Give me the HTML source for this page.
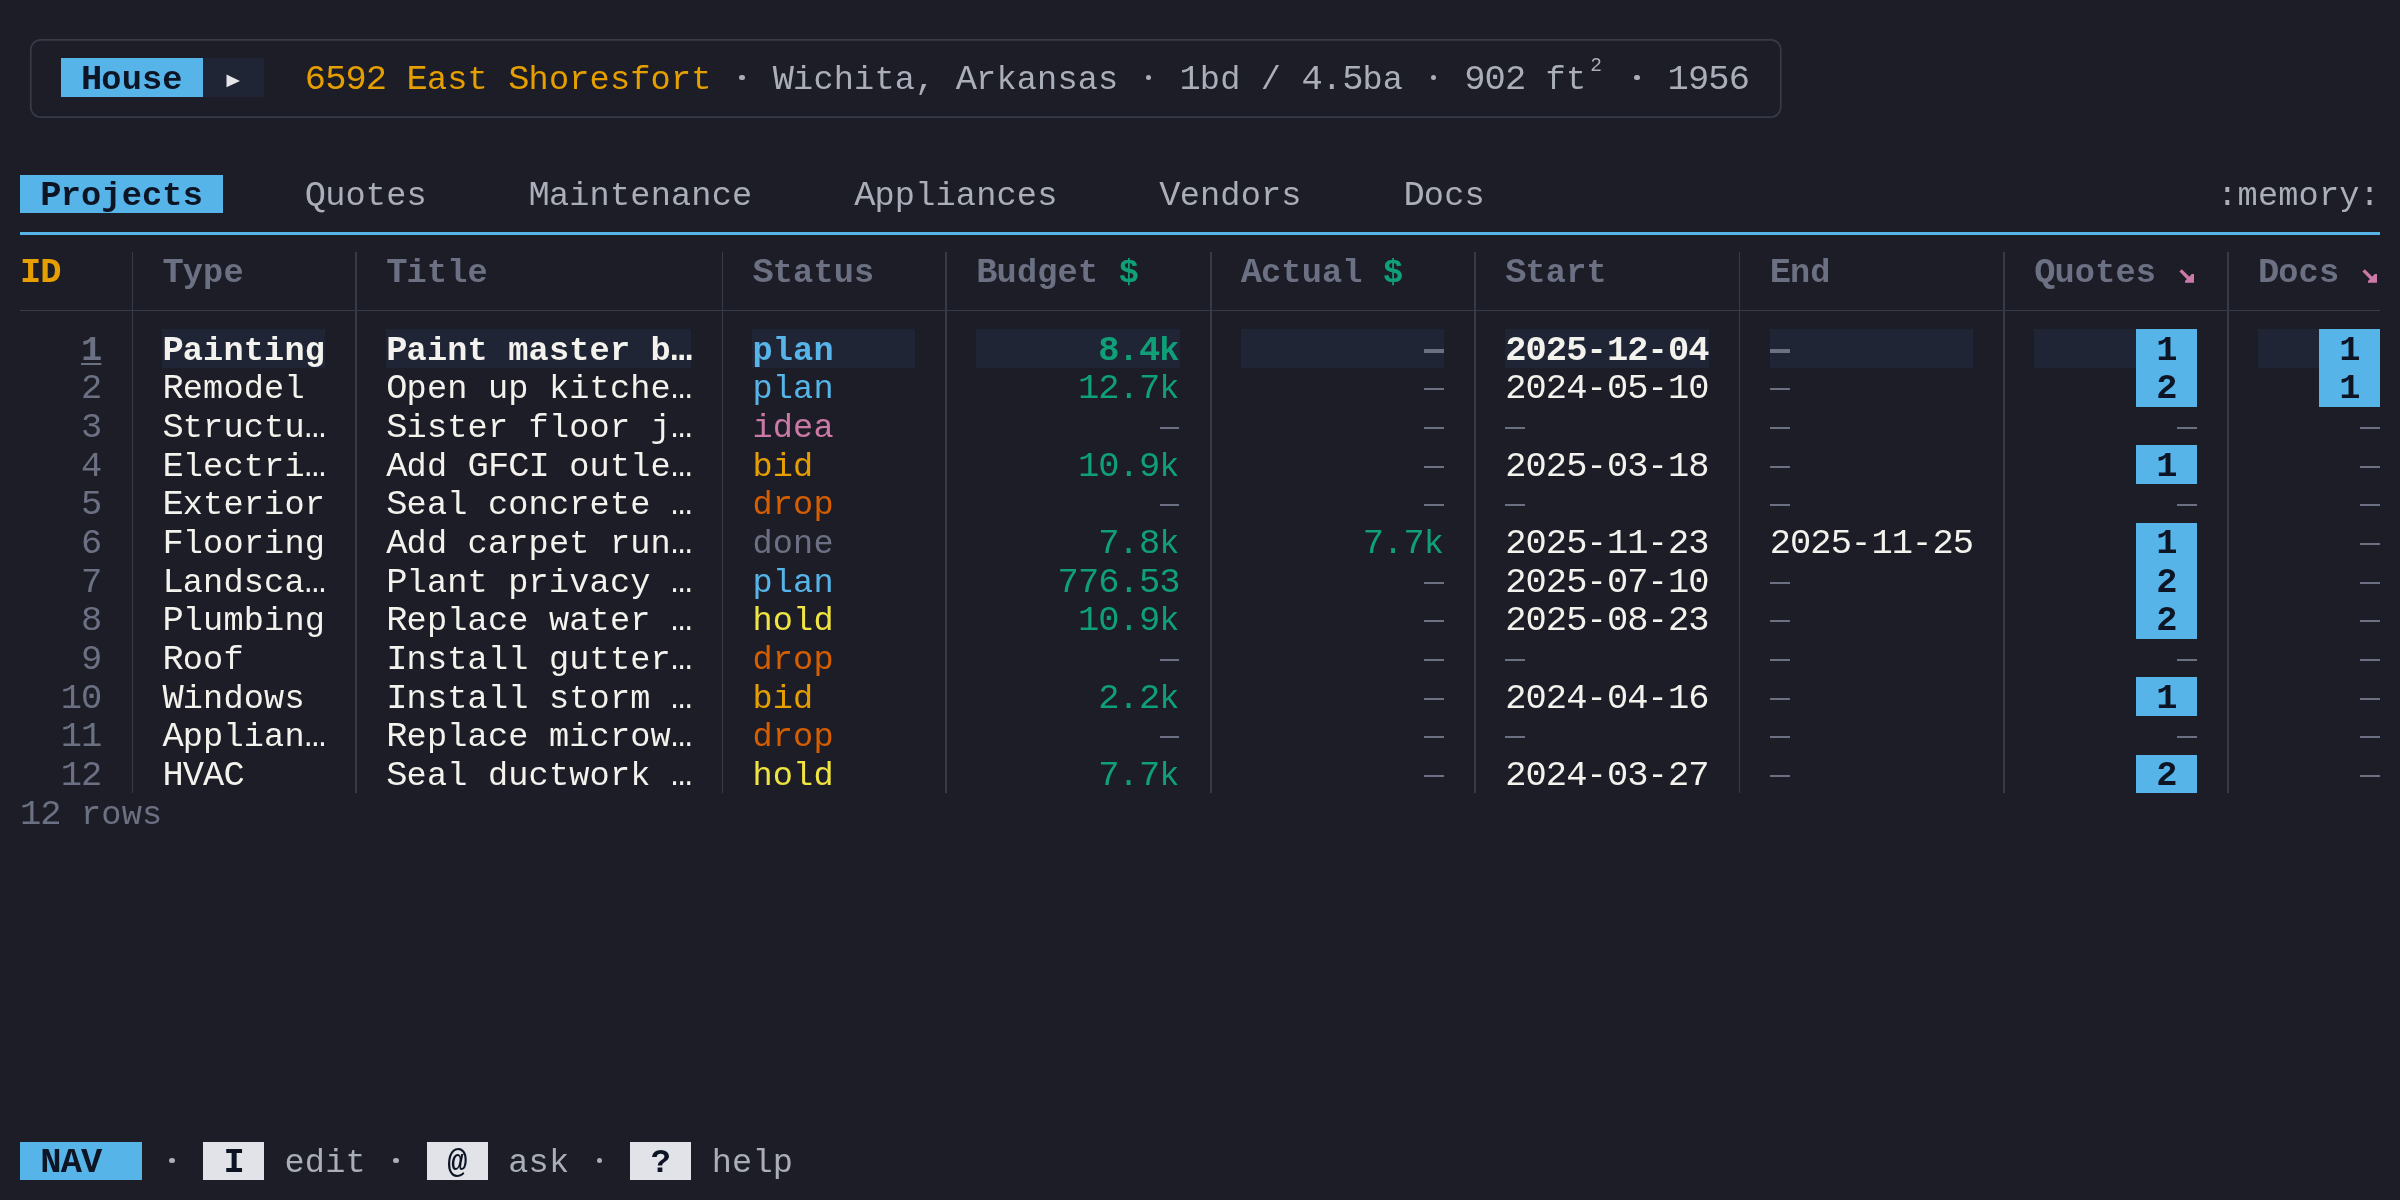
<!DOCTYPE html>
<html><head><meta charset="utf-8"><style>
html,body{margin:0;padding:0;}
body{width:2400px;height:1200px;overflow:hidden;background:#1d1d27;position:relative;}
.b{position:absolute;}
.t{position:absolute;white-space:pre;font-family:"Liberation Mono",monospace;font-size:33.6px;line-height:38.68px;height:38.68px;letter-spacing:0.185px;}
.bd{font-weight:bold;}
.u{font-size:35.4px;letter-spacing:-0.895px;line-height:0;}
.ul{text-decoration:underline;text-decoration-thickness:2px;text-underline-offset:3px;}
#root{position:absolute;left:0;top:0;width:2400px;height:1200px;will-change:transform;}
</style></head><body><div id="root">
<svg class="b" style="left:0;top:0" width="1800" height="140"><rect x="30.75" y="39.8" width="1750" height="77.3" rx="10" ry="10" fill="none" stroke="#363b4a" stroke-width="1.7"/></svg>
<div class="b" style="left:60.69px;top:58.48px;width:142.41px;height:38.68px;background:#56b4e9"></div>
<div class="t bd" style="left:81.03px;top:60.88px;color:#0d1424"><span class="u">H</span>ouse</div>
<div class="b" style="left:203.10px;top:58.48px;width:61.03px;height:38.68px;background:#202536"></div>
<svg class="b" style="left:226px;top:74px" width="15" height="14" viewBox="0 0 15 14"><path d="M0.5 0.6 L14 6.9 L0.5 13.2 Z" fill="#e6e6ea"/></svg>
<div class="t" style="left:304.83px;top:60.88px;color:#e69f00"><span class="u">6592</span> <span class="u">E</span>ast <span class="u">S</span>horesfort</div>
<div class="t" style="left:711.73px;top:60.88px;color:#a9aeb9">   <span class="u">W</span>ichita, <span class="u">A</span>rkansas   <span class="u">1</span>bd / <span class="u">4</span>.<span class="u">5</span>ba   <span class="u">902</span> ft    <span class="u">1956</span></div>
<div class="b" style="left:1590.2px;top:57.3px;font-family:'Liberation Mono',monospace;font-size:19.5px;line-height:19.5px;color:#a9aeb9">2</div>
<div class="b" style="left:739.15px;top:74.58px;width:5.4px;height:5.4px;border-radius:50%;background:#a9aeb9"></div>
<div class="b" style="left:1146.05px;top:74.58px;width:5.4px;height:5.4px;border-radius:50%;background:#a9aeb9"></div>
<div class="b" style="left:1430.88px;top:74.58px;width:5.4px;height:5.4px;border-radius:50%;background:#a9aeb9"></div>
<div class="b" style="left:1634.33px;top:74.58px;width:5.4px;height:5.4px;border-radius:50%;background:#a9aeb9"></div>
<div class="b" style="left:20.00px;top:174.52px;width:203.45px;height:38.68px;background:#56b4e9"></div>
<div class="t bd" style="left:40.34px;top:176.92px;color:#0d1424"><span class="u">P</span>rojects</div>
<div class="t" style="left:304.83px;top:176.92px;color:#a9aeb9"><span class="u">Q</span>uotes</div>
<div class="t" style="left:528.62px;top:176.92px;color:#a9aeb9"><span class="u">M</span>aintenance</div>
<div class="t" style="left:854.14px;top:176.92px;color:#a9aeb9"><span class="u">A</span>ppliances</div>
<div class="t" style="left:1159.32px;top:176.92px;color:#a9aeb9"><span class="u">V</span>endors</div>
<div class="t" style="left:1403.46px;top:176.92px;color:#a9aeb9"><span class="u">D</span>ocs</div>
<div class="t" style="left:2217.26px;top:176.92px;color:#a9aeb9">:memory:</div>
<div class="b" style="left:20px;top:231.5px;width:2360px;height:3px;background:#56b4e9"></div>
<div class="t bd" style="left:20.00px;top:254.28px;color:#e69f00"><span class="u">ID</span></div>
<div class="t bd" style="left:162.41px;top:254.28px;color:#6b7183"><span class="u">T</span>ype</div>
<div class="t bd" style="left:386.21px;top:254.28px;color:#6b7183"><span class="u">T</span>itle</div>
<div class="t bd" style="left:752.42px;top:254.28px;color:#6b7183"><span class="u">S</span>tatus</div>
<div class="t bd" style="left:976.21px;top:254.28px;color:#6b7183"><span class="u">B</span>udget</div>
<div class="t bd" style="left:1240.70px;top:254.28px;color:#6b7183"><span class="u">A</span>ctual</div>
<div class="t bd" style="left:1505.18px;top:254.28px;color:#6b7183"><span class="u">S</span>tart</div>
<div class="t bd" style="left:1769.67px;top:254.28px;color:#6b7183"><span class="u">E</span>nd</div>
<div class="t bd" style="left:2034.15px;top:254.28px;color:#6b7183"><span class="u">Q</span>uotes</div>
<div class="t bd" style="left:2257.95px;top:254.28px;color:#6b7183"><span class="u">D</span>ocs</div>
<div class="t bd" style="left:1118.63px;top:254.28px;color:#0fa078">$</div>
<div class="t bd" style="left:1383.12px;top:254.28px;color:#0fa078">$</div>
<svg class="b" style="left:2179.17px;top:269.48px" width="16" height="16" viewBox="0 0 16 16"><path d="M1.6 1.4 L11 10.8" stroke="#cc79a7" stroke-width="3.4" fill="none"/><path d="M6 12 L6 13.8 L15 13.8 L15 5.1 L12.8 5.1 Z" fill="#cc79a7"/></svg>
<svg class="b" style="left:2362.27px;top:269.48px" width="16" height="16" viewBox="0 0 16 16"><path d="M1.6 1.4 L11 10.8" stroke="#cc79a7" stroke-width="3.4" fill="none"/><path d="M6 12 L6 13.8 L15 13.8 L15 5.1 L12.8 5.1 Z" fill="#cc79a7"/></svg>
<div class="b" style="left:131.55px;top:251.88px;width:1.7px;height:541.52px;background:#363b4a"></div>
<div class="b" style="left:355.34px;top:251.88px;width:1.7px;height:541.52px;background:#363b4a"></div>
<div class="b" style="left:721.55px;top:251.88px;width:1.7px;height:541.52px;background:#363b4a"></div>
<div class="b" style="left:945.35px;top:251.88px;width:1.7px;height:541.52px;background:#363b4a"></div>
<div class="b" style="left:1209.83px;top:251.88px;width:1.7px;height:541.52px;background:#363b4a"></div>
<div class="b" style="left:1474.32px;top:251.88px;width:1.7px;height:541.52px;background:#363b4a"></div>
<div class="b" style="left:1738.80px;top:251.88px;width:1.7px;height:541.52px;background:#363b4a"></div>
<div class="b" style="left:2003.29px;top:251.88px;width:1.7px;height:541.52px;background:#363b4a"></div>
<div class="b" style="left:2227.08px;top:251.88px;width:1.7px;height:541.52px;background:#363b4a"></div>
<div class="b" style="left:20px;top:309.6px;width:2360px;height:1.6px;background:#363b4a"></div>
<div class="b" style="left:162.41px;top:329.24px;width:162.76px;height:38.68px;background:#202536"></div>
<div class="b" style="left:386.21px;top:329.24px;width:305.17px;height:38.68px;background:#202536"></div>
<div class="b" style="left:752.42px;top:329.24px;width:162.76px;height:38.68px;background:#202536"></div>
<div class="b" style="left:976.21px;top:329.24px;width:203.45px;height:38.68px;background:#202536"></div>
<div class="b" style="left:1240.70px;top:329.24px;width:203.45px;height:38.68px;background:#202536"></div>
<div class="b" style="left:1505.18px;top:329.24px;width:203.45px;height:38.68px;background:#202536"></div>
<div class="b" style="left:1769.67px;top:329.24px;width:203.45px;height:38.68px;background:#202536"></div>
<div class="b" style="left:2034.15px;top:329.24px;width:162.76px;height:38.68px;background:#202536"></div>
<div class="b" style="left:2257.95px;top:329.24px;width:122.07px;height:38.68px;background:#202536"></div>
<div class="t bd ul" style="left:81.03px;top:331.64px;color:#6b7183"><span class="u">1</span></div>
<div class="t bd" style="left:162.41px;top:331.64px;color:#f3f2ed"><span class="u">P</span>ainting</div>
<div class="t bd" style="left:386.21px;top:331.64px;color:#f3f2ed"><span class="u">P</span>aint master b<span class="u">…</span></div>
<div class="t bd" style="left:752.42px;top:331.64px;color:#56b4e9">plan</div>
<div class="t bd" style="left:1098.28px;top:331.64px;color:#0fa078"><span class="u">8</span>.<span class="u">4</span>k</div>
<div class="b" style="left:1424.10px;top:349.00px;width:19.74px;height:4px;background:#6b7183"></div>
<div class="t bd" style="left:1505.18px;top:331.64px;color:#f3f2ed"><span class="u">2025</span>-<span class="u">12</span>-<span class="u">04</span></div>
<div class="b" style="left:1769.97px;top:349.00px;width:19.74px;height:4px;background:#6b7183"></div>
<div class="b" style="left:2135.88px;top:329.24px;width:61.03px;height:38.68px;background:#56b4e9"></div>
<div class="t bd" style="left:2156.22px;top:331.64px;color:#0d1424"><span class="u">1</span></div>
<div class="b" style="left:2318.98px;top:329.24px;width:61.03px;height:38.68px;background:#56b4e9"></div>
<div class="t bd" style="left:2339.33px;top:331.64px;color:#0d1424"><span class="u">1</span></div>
<div class="t" style="left:81.03px;top:370.32px;color:#6b7183"><span class="u">2</span></div>
<div class="t" style="left:162.41px;top:370.32px;color:#f3f2ed"><span class="u">R</span>emodel</div>
<div class="t" style="left:386.21px;top:370.32px;color:#f3f2ed"><span class="u">O</span>pen up kitche<span class="u">…</span></div>
<div class="t" style="left:752.42px;top:370.32px;color:#56b4e9">plan</div>
<div class="t" style="left:1077.94px;top:370.32px;color:#0fa078"><span class="u">12</span>.<span class="u">7</span>k</div>
<div class="b" style="left:1424.10px;top:388.00px;width:19.74px;height:2px;background:#6b7183"></div>
<div class="t" style="left:1505.18px;top:370.32px;color:#f3f2ed"><span class="u">2024</span>-<span class="u">05</span>-<span class="u">10</span></div>
<div class="b" style="left:1769.97px;top:388.00px;width:19.74px;height:2px;background:#6b7183"></div>
<div class="b" style="left:2135.88px;top:367.92px;width:61.03px;height:38.68px;background:#56b4e9"></div>
<div class="t bd" style="left:2156.22px;top:370.32px;color:#0d1424"><span class="u">2</span></div>
<div class="b" style="left:2318.98px;top:367.92px;width:61.03px;height:38.68px;background:#56b4e9"></div>
<div class="t bd" style="left:2339.33px;top:370.32px;color:#0d1424"><span class="u">1</span></div>
<div class="t" style="left:81.03px;top:409.00px;color:#6b7183"><span class="u">3</span></div>
<div class="t" style="left:162.41px;top:409.00px;color:#f3f2ed"><span class="u">S</span>tructu<span class="u">…</span></div>
<div class="t" style="left:386.21px;top:409.00px;color:#f3f2ed"><span class="u">S</span>ister floor j<span class="u">…</span></div>
<div class="t" style="left:752.42px;top:409.00px;color:#cc79a7">idea</div>
<div class="b" style="left:1159.62px;top:427.00px;width:19.74px;height:2px;background:#6b7183"></div>
<div class="b" style="left:1424.10px;top:427.00px;width:19.74px;height:2px;background:#6b7183"></div>
<div class="b" style="left:1505.48px;top:427.00px;width:19.74px;height:2px;background:#6b7183"></div>
<div class="b" style="left:1769.97px;top:427.00px;width:19.74px;height:2px;background:#6b7183"></div>
<div class="b" style="left:2176.87px;top:427.00px;width:19.74px;height:2px;background:#6b7183"></div>
<div class="b" style="left:2359.97px;top:427.00px;width:19.74px;height:2px;background:#6b7183"></div>
<div class="t" style="left:81.03px;top:447.68px;color:#6b7183"><span class="u">4</span></div>
<div class="t" style="left:162.41px;top:447.68px;color:#f3f2ed"><span class="u">E</span>lectri<span class="u">…</span></div>
<div class="t" style="left:386.21px;top:447.68px;color:#f3f2ed"><span class="u">A</span>dd <span class="u">GFCI</span> outle<span class="u">…</span></div>
<div class="t" style="left:752.42px;top:447.68px;color:#e69f00">bid</div>
<div class="t" style="left:1077.94px;top:447.68px;color:#0fa078"><span class="u">10</span>.<span class="u">9</span>k</div>
<div class="b" style="left:1424.10px;top:466.00px;width:19.74px;height:2px;background:#6b7183"></div>
<div class="t" style="left:1505.18px;top:447.68px;color:#f3f2ed"><span class="u">2025</span>-<span class="u">03</span>-<span class="u">18</span></div>
<div class="b" style="left:1769.97px;top:466.00px;width:19.74px;height:2px;background:#6b7183"></div>
<div class="b" style="left:2135.88px;top:445.28px;width:61.03px;height:38.68px;background:#56b4e9"></div>
<div class="t bd" style="left:2156.22px;top:447.68px;color:#0d1424"><span class="u">1</span></div>
<div class="b" style="left:2359.97px;top:466.00px;width:19.74px;height:2px;background:#6b7183"></div>
<div class="t" style="left:81.03px;top:486.36px;color:#6b7183"><span class="u">5</span></div>
<div class="t" style="left:162.41px;top:486.36px;color:#f3f2ed"><span class="u">E</span>xterior</div>
<div class="t" style="left:386.21px;top:486.36px;color:#f3f2ed"><span class="u">S</span>eal concrete <span class="u">…</span></div>
<div class="t" style="left:752.42px;top:486.36px;color:#d55e00">drop</div>
<div class="b" style="left:1159.62px;top:504.00px;width:19.74px;height:2px;background:#6b7183"></div>
<div class="b" style="left:1424.10px;top:504.00px;width:19.74px;height:2px;background:#6b7183"></div>
<div class="b" style="left:1505.48px;top:504.00px;width:19.74px;height:2px;background:#6b7183"></div>
<div class="b" style="left:1769.97px;top:504.00px;width:19.74px;height:2px;background:#6b7183"></div>
<div class="b" style="left:2176.87px;top:504.00px;width:19.74px;height:2px;background:#6b7183"></div>
<div class="b" style="left:2359.97px;top:504.00px;width:19.74px;height:2px;background:#6b7183"></div>
<div class="t" style="left:81.03px;top:525.04px;color:#6b7183"><span class="u">6</span></div>
<div class="t" style="left:162.41px;top:525.04px;color:#f3f2ed"><span class="u">F</span>looring</div>
<div class="t" style="left:386.21px;top:525.04px;color:#f3f2ed"><span class="u">A</span>dd carpet run<span class="u">…</span></div>
<div class="t" style="left:752.42px;top:525.04px;color:#6b7183">done</div>
<div class="t" style="left:1098.28px;top:525.04px;color:#0fa078"><span class="u">7</span>.<span class="u">8</span>k</div>
<div class="t" style="left:1362.77px;top:525.04px;color:#0fa078"><span class="u">7</span>.<span class="u">7</span>k</div>
<div class="t" style="left:1505.18px;top:525.04px;color:#f3f2ed"><span class="u">2025</span>-<span class="u">11</span>-<span class="u">23</span></div>
<div class="t" style="left:1769.67px;top:525.04px;color:#f3f2ed"><span class="u">2025</span>-<span class="u">11</span>-<span class="u">25</span></div>
<div class="b" style="left:2135.88px;top:522.64px;width:61.03px;height:38.68px;background:#56b4e9"></div>
<div class="t bd" style="left:2156.22px;top:525.04px;color:#0d1424"><span class="u">1</span></div>
<div class="b" style="left:2359.97px;top:543.00px;width:19.74px;height:2px;background:#6b7183"></div>
<div class="t" style="left:81.03px;top:563.72px;color:#6b7183"><span class="u">7</span></div>
<div class="t" style="left:162.41px;top:563.72px;color:#f3f2ed"><span class="u">L</span>andsca<span class="u">…</span></div>
<div class="t" style="left:386.21px;top:563.72px;color:#f3f2ed"><span class="u">P</span>lant privacy <span class="u">…</span></div>
<div class="t" style="left:752.42px;top:563.72px;color:#56b4e9">plan</div>
<div class="t" style="left:1057.60px;top:563.72px;color:#0fa078"><span class="u">776</span>.<span class="u">53</span></div>
<div class="b" style="left:1424.10px;top:582.00px;width:19.74px;height:2px;background:#6b7183"></div>
<div class="t" style="left:1505.18px;top:563.72px;color:#f3f2ed"><span class="u">2025</span>-<span class="u">07</span>-<span class="u">10</span></div>
<div class="b" style="left:1769.97px;top:582.00px;width:19.74px;height:2px;background:#6b7183"></div>
<div class="b" style="left:2135.88px;top:561.32px;width:61.03px;height:38.68px;background:#56b4e9"></div>
<div class="t bd" style="left:2156.22px;top:563.72px;color:#0d1424"><span class="u">2</span></div>
<div class="b" style="left:2359.97px;top:582.00px;width:19.74px;height:2px;background:#6b7183"></div>
<div class="t" style="left:81.03px;top:602.40px;color:#6b7183"><span class="u">8</span></div>
<div class="t" style="left:162.41px;top:602.40px;color:#f3f2ed"><span class="u">P</span>lumbing</div>
<div class="t" style="left:386.21px;top:602.40px;color:#f3f2ed"><span class="u">R</span>eplace water <span class="u">…</span></div>
<div class="t" style="left:752.42px;top:602.40px;color:#f0e442">hold</div>
<div class="t" style="left:1077.94px;top:602.40px;color:#0fa078"><span class="u">10</span>.<span class="u">9</span>k</div>
<div class="b" style="left:1424.10px;top:620.00px;width:19.74px;height:2px;background:#6b7183"></div>
<div class="t" style="left:1505.18px;top:602.40px;color:#f3f2ed"><span class="u">2025</span>-<span class="u">08</span>-<span class="u">23</span></div>
<div class="b" style="left:1769.97px;top:620.00px;width:19.74px;height:2px;background:#6b7183"></div>
<div class="b" style="left:2135.88px;top:600.00px;width:61.03px;height:38.68px;background:#56b4e9"></div>
<div class="t bd" style="left:2156.22px;top:602.40px;color:#0d1424"><span class="u">2</span></div>
<div class="b" style="left:2359.97px;top:620.00px;width:19.74px;height:2px;background:#6b7183"></div>
<div class="t" style="left:81.03px;top:641.08px;color:#6b7183"><span class="u">9</span></div>
<div class="t" style="left:162.41px;top:641.08px;color:#f3f2ed"><span class="u">R</span>oof</div>
<div class="t" style="left:386.21px;top:641.08px;color:#f3f2ed"><span class="u">I</span>nstall gutter<span class="u">…</span></div>
<div class="t" style="left:752.42px;top:641.08px;color:#d55e00">drop</div>
<div class="b" style="left:1159.62px;top:659.00px;width:19.74px;height:2px;background:#6b7183"></div>
<div class="b" style="left:1424.10px;top:659.00px;width:19.74px;height:2px;background:#6b7183"></div>
<div class="b" style="left:1505.48px;top:659.00px;width:19.74px;height:2px;background:#6b7183"></div>
<div class="b" style="left:1769.97px;top:659.00px;width:19.74px;height:2px;background:#6b7183"></div>
<div class="b" style="left:2176.87px;top:659.00px;width:19.74px;height:2px;background:#6b7183"></div>
<div class="b" style="left:2359.97px;top:659.00px;width:19.74px;height:2px;background:#6b7183"></div>
<div class="t" style="left:60.69px;top:679.76px;color:#6b7183"><span class="u">10</span></div>
<div class="t" style="left:162.41px;top:679.76px;color:#f3f2ed"><span class="u">W</span>indows</div>
<div class="t" style="left:386.21px;top:679.76px;color:#f3f2ed"><span class="u">I</span>nstall storm <span class="u">…</span></div>
<div class="t" style="left:752.42px;top:679.76px;color:#e69f00">bid</div>
<div class="t" style="left:1098.28px;top:679.76px;color:#0fa078"><span class="u">2</span>.<span class="u">2</span>k</div>
<div class="b" style="left:1424.10px;top:698.00px;width:19.74px;height:2px;background:#6b7183"></div>
<div class="t" style="left:1505.18px;top:679.76px;color:#f3f2ed"><span class="u">2024</span>-<span class="u">04</span>-<span class="u">16</span></div>
<div class="b" style="left:1769.97px;top:698.00px;width:19.74px;height:2px;background:#6b7183"></div>
<div class="b" style="left:2135.88px;top:677.36px;width:61.03px;height:38.68px;background:#56b4e9"></div>
<div class="t bd" style="left:2156.22px;top:679.76px;color:#0d1424"><span class="u">1</span></div>
<div class="b" style="left:2359.97px;top:698.00px;width:19.74px;height:2px;background:#6b7183"></div>
<div class="t" style="left:60.69px;top:718.44px;color:#6b7183"><span class="u">11</span></div>
<div class="t" style="left:162.41px;top:718.44px;color:#f3f2ed"><span class="u">A</span>pplian<span class="u">…</span></div>
<div class="t" style="left:386.21px;top:718.44px;color:#f3f2ed"><span class="u">R</span>eplace microw<span class="u">…</span></div>
<div class="t" style="left:752.42px;top:718.44px;color:#d55e00">drop</div>
<div class="b" style="left:1159.62px;top:736.00px;width:19.74px;height:2px;background:#6b7183"></div>
<div class="b" style="left:1424.10px;top:736.00px;width:19.74px;height:2px;background:#6b7183"></div>
<div class="b" style="left:1505.48px;top:736.00px;width:19.74px;height:2px;background:#6b7183"></div>
<div class="b" style="left:1769.97px;top:736.00px;width:19.74px;height:2px;background:#6b7183"></div>
<div class="b" style="left:2176.87px;top:736.00px;width:19.74px;height:2px;background:#6b7183"></div>
<div class="b" style="left:2359.97px;top:736.00px;width:19.74px;height:2px;background:#6b7183"></div>
<div class="t" style="left:60.69px;top:757.12px;color:#6b7183"><span class="u">12</span></div>
<div class="t" style="left:162.41px;top:757.12px;color:#f3f2ed"><span class="u">HVAC</span></div>
<div class="t" style="left:386.21px;top:757.12px;color:#f3f2ed"><span class="u">S</span>eal ductwork <span class="u">…</span></div>
<div class="t" style="left:752.42px;top:757.12px;color:#f0e442">hold</div>
<div class="t" style="left:1098.28px;top:757.12px;color:#0fa078"><span class="u">7</span>.<span class="u">7</span>k</div>
<div class="b" style="left:1424.10px;top:775.00px;width:19.74px;height:2px;background:#6b7183"></div>
<div class="t" style="left:1505.18px;top:757.12px;color:#f3f2ed"><span class="u">2024</span>-<span class="u">03</span>-<span class="u">27</span></div>
<div class="b" style="left:1769.97px;top:775.00px;width:19.74px;height:2px;background:#6b7183"></div>
<div class="b" style="left:2135.88px;top:754.72px;width:61.03px;height:38.68px;background:#56b4e9"></div>
<div class="t bd" style="left:2156.22px;top:757.12px;color:#0d1424"><span class="u">2</span></div>
<div class="b" style="left:2359.97px;top:775.00px;width:19.74px;height:2px;background:#6b7183"></div>
<div class="t" style="left:20.00px;top:795.80px;color:#6b7183"><span class="u">12</span> rows</div>
<div class="b" style="left:20.00px;top:1141.52px;width:122.07px;height:38.68px;background:#56b4e9"></div>
<div class="t bd" style="left:40.34px;top:1143.92px;color:#0d1424"><span class="u">NAV</span></div>
<div class="b" style="left:169.49px;top:1157.62px;width:5.4px;height:5.4px;border-radius:50%;background:#a9aeb9"></div>
<div class="b" style="left:203.10px;top:1141.52px;width:61.03px;height:38.68px;background:#e1e3e8"></div>
<div class="t bd" style="left:223.45px;top:1143.92px;color:#0d1424"><span class="u">I</span></div>
<div class="t" style="left:284.49px;top:1143.92px;color:#a9aeb9">edit</div>
<div class="b" style="left:393.28px;top:1157.62px;width:5.4px;height:5.4px;border-radius:50%;background:#a9aeb9"></div>
<div class="b" style="left:426.90px;top:1141.52px;width:61.03px;height:38.68px;background:#e1e3e8"></div>
<div class="t bd" style="left:447.25px;top:1143.92px;color:#0d1424">@</div>
<div class="t" style="left:508.28px;top:1143.92px;color:#a9aeb9">ask</div>
<div class="b" style="left:596.73px;top:1157.62px;width:5.4px;height:5.4px;border-radius:50%;background:#a9aeb9"></div>
<div class="b" style="left:630.35px;top:1141.52px;width:61.03px;height:38.68px;background:#e1e3e8"></div>
<div class="t bd" style="left:650.69px;top:1143.92px;color:#0d1424">?</div>
<div class="t" style="left:711.73px;top:1143.92px;color:#a9aeb9">help</div>
</div></body></html>
